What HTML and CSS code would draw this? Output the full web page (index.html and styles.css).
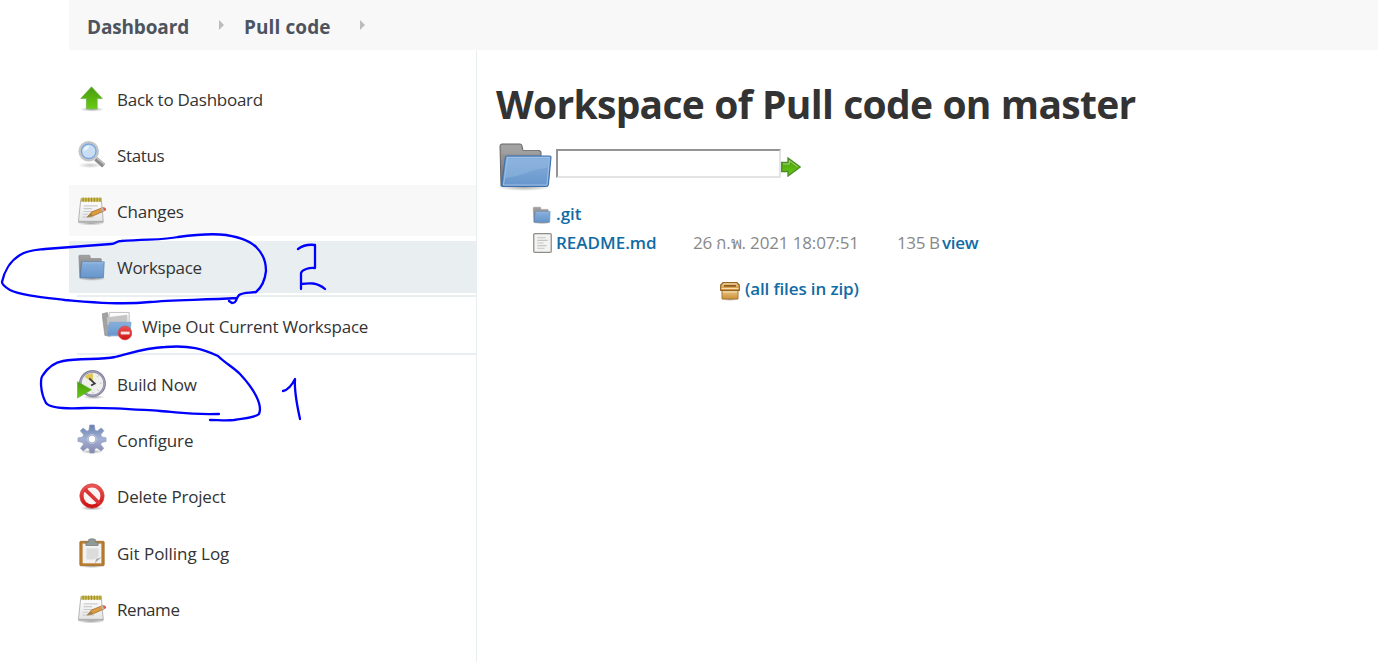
FILE: index.html
```html
<!DOCTYPE html>
<html lang="en">
<head>
<meta charset="utf-8">
<title>Workspace of Pull code on master</title>
<link rel="stylesheet" href="styles.css">
</head>
<body>
<svg class="defs" width="0" height="0" aria-hidden="true">
  <defs>
    <linearGradient id="green" x1="0" y1="0" x2="0" y2="1"><stop offset="0" stop-color="#4a9a10"/><stop offset="1" stop-color="#66cc10"/></linearGradient>
    <linearGradient id="blue" x1="0" y1="0" x2="0" y2="1"><stop offset="0" stop-color="#86afdd"/><stop offset="1" stop-color="#6796cb"/></linearGradient>
    <linearGradient id="grey" x1="0" y1="0" x2="0" y2="1"><stop offset="0" stop-color="#a3a3a3"/><stop offset="1" stop-color="#6d6d6d"/></linearGradient>
    <linearGradient id="paper" x1="0" y1="0" x2="0" y2="1"><stop offset="0" stop-color="#ffffff"/><stop offset="1" stop-color="#e3e3e3"/></linearGradient>
    <linearGradient id="gear" x1="0" y1="0" x2="0" y2="1"><stop offset="0" stop-color="#647fae"/><stop offset=".5" stop-color="#a4b2d4"/><stop offset="1" stop-color="#8585ad"/></linearGradient>
    <linearGradient id="red" x1="0" y1="0" x2="0" y2="1"><stop offset="0" stop-color="#ea5555"/><stop offset="1" stop-color="#cf1212"/></linearGradient>
    <linearGradient id="wood" x1="0" y1="0" x2="0" y2="1"><stop offset="0" stop-color="#e9c98f"/><stop offset="1" stop-color="#cf8f35"/></linearGradient>
    <radialGradient id="shadow"><stop offset="0" stop-color="#000" stop-opacity=".35"/><stop offset="1" stop-color="#000" stop-opacity="0"/></radialGradient>
    <symbol id="i-notepad" viewBox="0 0 32 32">
      <ellipse cx="15" cy="29" rx="15" ry="2.500" fill="url(#shadow)"/>
      <path d="M4 4h22l2 23.500H1.500z" fill="url(#paper)" stroke="#b0b0b0"/>
      <path d="M1.500 26.500h26.500v2H1.500z" fill="#b0b0b0"/>
      <path d="M4 2h22.500v4H4z" fill="#cbb84e"/>
      <path d="M6.500 1.500v5m3-5v5m3-5v5m3-5v5m3-5v5m3-5v5m3-5v5" stroke="#9b8b2c" stroke-width="1"/>
      <path d="M7 10.500h15M7 13.500h9M7 16.500h14M6 19.500h6M6 22.500h12" stroke="#cbcbcb" stroke-width="1.200"/>
      <path d="M11 22.500l4.500-5.500 11.500-4.500 2 3.500-11.500 5z" fill="#dc9a42" stroke="#99641e" stroke-width=".7"/>
      <path d="M11 22.500l4-4.500 2 3.200z" fill="#a68049"/>
      <path d="M25.500 13.200l2-.8 1.700 3.500-2 .9z" fill="#bbb"/>
      <path d="M27.500 12.200c2-1 5 1.800 3 3.300l-1.500.6z" fill="#df5a50"/>
    </symbol>
    <symbol id="i-folder" viewBox="0 0 32 32">
      <ellipse cx="16" cy="28.500" rx="15" ry="2.300" fill="url(#shadow)"/>
      <path d="M2 4.500q0-1 1-1h10q1 0 1 1V7h11q1 0 1 1v19.500H3z" fill="url(#grey)" stroke="#8a8a8a" stroke-width=".7"/>
      <path d="M5 10.500h24l-.8 17H3.500z" fill="url(#blue)" stroke="#557fb3" stroke-width=".8" stroke-linejoin="round"/>
      <path d="M6 11.500h22.200" stroke="#a8c5e6" stroke-width=".8"/>
    </symbol>
  </defs>
</svg>

<header class="crumbs">
  <a class="crumb dash">Dashboard</a>
  <svg class="caret" width="5" height="10" viewBox="0 0 5 10"><path d="M0 0l5 5-5 5z"/></svg>
  <a class="crumb pull">Pull code</a>
  <svg class="caret" width="5" height="10" viewBox="0 0 5 10"><path d="M0 0l5 5-5 5z"/></svg>
</header>

<div class="page">
  <nav class="tasks">
    <a class="task">
      <svg class="icon" viewBox="0 0 32 32"><ellipse cx="16" cy="27" rx="13" ry="2.500" fill="url(#shadow)"/><path d="M15.500 3L27 15.500H21.500v11H10V15.500H4z" fill="url(#green)" stroke="#6db648" stroke-width=".8"/></svg>
      <span class="t-back">Back to Dashboard</span>
    </a>
    <a class="task">
      <svg class="icon" viewBox="0 0 32 32"><ellipse cx="14" cy="27" rx="13" ry="3" fill="url(#shadow)" opacity=".6"/><path d="M20 20l8.500 7.500" stroke="#8c8c8c" stroke-width="5"/><path d="M21 19l8.500 7.500" stroke="#c4c4c4" stroke-width="1.500"/><circle cx="12.500" cy="12" r="9.800" fill="#c9def4" stroke="#c6c6c6" stroke-width="2.400"/><circle cx="12.500" cy="12" r="7.800" fill="none" stroke="#7ba4d7" stroke-width="1.500"/><path d="M7 12c0-3.500 2.500-5.500 6-5.500-1 3-2.500 4.500-6 5.500z" fill="#edf5fd"/></svg>
      <span class="t-status">Status</span>
    </a>
    <a class="task hover">
      <svg class="icon"><use href="#i-notepad"/></svg>
      <span class="t-changes">Changes</span>
    </a>
    <a class="task active">
      <svg class="icon"><use href="#i-folder"/></svg>
      <span class="t-workspace">Workspace</span>
    </a>
    <div class="subtasks">
      <a class="task">
        <svg class="icon" viewBox="0 0 32 32"><path d="M0 3l6-1.500 3 25.500-6-1z" fill="#a2a2a2" stroke="#8d8d8d" stroke-width=".6"/><path d="M8 1.500h21v13H6z" fill="url(#paper)" stroke="#aaa" stroke-width=".8"/><path d="M5 7l22-3v11H6z" fill="#c4c4c4"/><path d="M8 12h23l-1.500 14.500H5.500z" fill="url(#blue)" stroke="#7fa4d0" stroke-width=".8"/><circle cx="24.500" cy="23.500" r="7.300" fill="url(#red)" stroke="#d54a4a" stroke-width=".8"/><path d="M20 22h9.500v3H20z" fill="#f7e6e6"/></svg>
        <span class="t-wipe">Wipe Out Current Workspace</span>
      </a>
    </div>
    <a class="task">
      <svg class="icon" viewBox="0 0 32 32"><ellipse cx="18" cy="30" rx="12" ry="2" fill="url(#shadow)"/><circle cx="16.500" cy="15.500" r="13" fill="#efefec" stroke="#82829f" stroke-width="2.800"/><circle cx="16.500" cy="15.500" r="12.800" fill="none" stroke="#aaaac2" stroke-width="1"/><path d="M17 14L8 8.500A11 11 0 0 1 17 4.500z" fill="#dfc65a"/><path d="M13 10l6 5.500-4 2" stroke="#3c3c3c" stroke-width="1.800" fill="none"/><path d="M22 8l1-1m2 8h1m-4 7l1 1m-6 2v1" stroke="#999" stroke-width="1"/><path d="M.500 13.500L15.500 22 .500 31z" fill="url(#green)" stroke="#5ba436" stroke-width=".6"/></svg>
      <span class="t-build">Build Now</span>
    </a>
    <a class="task">
      <svg class="icon gear" viewBox="0 0 32 32"><ellipse cx="16" cy="29.500" rx="12" ry="2.500" fill="url(#shadow)"/><path fill-rule="evenodd" d="M13.500 1h5l.8 5.600 2.200.9 4.400-3.300 2.800 2.900-3.300 4.200.9 2.500 4.700.9v4l-4.800 1-.9 2.200 3.300 4.100-3 2.900-4.300-3.400-2.200 1-.9 4.500h-4.300l-1-4.700-2.100-.9-4.200 3.400-2.900-2.900 3.200-4.200-.8-2-5.100-1v-3.800l5.100-1 .9-2.400L3.500 7.200l3-2.900 4.200 3.300 2-.9zM16 12a4 4 0 1 0 .01 0z" fill="url(#gear)" stroke="#929dbf" stroke-width=".7" stroke-linejoin="round"/><circle cx="16" cy="16" r="4.800" fill="none" stroke="#bcc5df" stroke-width="1"/></svg>
      <span class="t-configure">Configure</span>
    </a>
    <a class="task">
      <svg class="icon" viewBox="0 0 32 32"><ellipse cx="16" cy="29" rx="13" ry="2.500" fill="url(#shadow)"/><circle cx="16" cy="16" r="11" fill="#f9f3f3" stroke="url(#red)" stroke-width="4"/><path d="M8.500 9l15.500 15" stroke="#dc3434" stroke-width="4"/><circle cx="16" cy="16" r="13" fill="none" stroke="#d04545" stroke-width=".7"/></svg>
      <span class="t-delete">Delete Project</span>
    </a>
    <a class="task">
      <svg class="icon" viewBox="0 0 32 32"><ellipse cx="16" cy="30" rx="14" ry="2" fill="url(#shadow)"/><rect x="3" y="3.500" width="26" height="26" rx="1" fill="#bb7b2c" stroke="#9c6d2e" stroke-width=".8"/><path d="M6 6h20v21H6z" fill="#f2f2f2"/><path d="M10 11h13v9l-5 3h-8z" fill="#dcdcdc"/><path d="M19 27l1.500-5 5.500-1.500z" fill="#aaa"/><path d="M9.500 8V5.500q0-1.500 2-1.500h1V1.500q3.500-1.500 7 0V4h1q2 0 2 1.500V8z" fill="#929a96" stroke="#68706c" stroke-width=".7"/></svg>
      <span class="t-git">Git Polling Log</span>
    </a>
    <a class="task">
      <svg class="icon"><use href="#i-notepad"/></svg>
      <span class="t-rename">Rename</span>
    </a>
  </nav>

  <main class="main">
    <h1>Workspace of Pull code on master</h1>
    <div class="pathbar">
      <svg class="big-folder" viewBox="0 0 56 56">
        <ellipse cx="28" cy="47" rx="27" ry="4" fill="url(#shadow)"/>
        <path d="M4 6q0-2 2-2h18q2 0 2 2l1 4.500h16q2 0 2 2V46H5z" fill="url(#grey)" stroke="#666"/>
        <path d="M5.500 7h19M5.500 9h20M5.500 11h37M5.500 13h38" stroke="#b0b0b0" stroke-width=".6"/>
        <path d="M11 16h42.500q1.500 0 1.400 1.500l-2.500 27q-.3 2-2.400 2H7.500q-2 0-1.700-2l3.500-26.500q.2-2 1.700-2z" fill="url(#blue)" stroke="#3d70ad" stroke-width="1.200"/>
        <path d="M11.500 17.500h42l-2.500 27.500H7.500z" fill="none" stroke="#a9c6e7" stroke-width=".8"/>
        <path d="M11 19h41.500l-1 9C35 29 28 36 8.500 38z" fill="#9bbde3" opacity=".4"/>
      </svg>
      <input class="path" type="text" aria-label="Path">
      <svg class="go" viewBox="0 0 20 20"><path d="M.7 5.500H7V1l12.200 9L7 19v-4.500H.7z" fill="url(#green)" stroke="#4c8b26" stroke-width="1.300"/><path d="M2 7h6.300V3.500l8.500 6.500" fill="none" stroke="#a5d583" stroke-width="1"/></svg>
    </div>
    <div class="files">
      <div class="row">
        <svg class="file-icon" viewBox="0 0 32 32"><use href="#i-folder"/></svg>
        <a class="link t-dotgit">.git</a>
      </div>
      <div class="row">
        <svg class="file-icon doc" viewBox="0 0 18 19"><rect x=".7" y=".7" width="16.600" height="17.600" rx="1" fill="#f3f3f1" stroke="#8d8d8b" stroke-width="1.200"/><path d="M4 4.500h8M4 7h10M4 9.500h6M4 12h9M4 14.500h7" stroke="#c5c5c5"/></svg>
        <a class="link t-readme">README.md</a>
        <span class="date">26 ก.พ. 2021 18:07:51</span>
        <span class="size">135 B</span>
        <a class="link t-view">view</a>
      </div>
    </div>
    <div class="zip">
      <svg class="box" viewBox="0 0 20 20"><ellipse cx="10" cy="18.500" rx="9" ry="1.500" fill="url(#shadow)"/><path d="M2 9h16v9H2z" fill="url(#wood)" stroke="#a97835"/><path d="M3 1.500h14l2.300 2.500v5.500H.7V4z" fill="url(#wood)" stroke="#946425" stroke-width="1.200"/><path d="M4 4h12v1.800H4z" fill="#8e5d20"/><path d="M1.500 7.500h17M3 11h14" stroke="#f6ddb0"/></svg>
      <a class="link t-zip">(all files in zip)</a>
    </div>
  </main>
</div>

<svg class="ink" viewBox="0 0 1378 662" aria-hidden="true">
  <path d="M237 298C200 300 170 300 150 302C120 305 90 302 65 300C40 297 20 295 10 290C5 287 2 284 2 282C4 272 10 261 20 255C28 250 37 250 45 249L111 244C116 244 116 241 121 241C150 239 165 240 178 237C200 234 218 234 226 235C244 238 253 243 257 248C264 255 266 263 266 271C265 280 262 287 256 292C250 293 243 292 239 295C235 300 237 303 232 303L229 301"/>
  <path d="M219 414C188 415 178 412 160 411C128 409 105 407 85 408C65 409 50 408 46 403C40 392 40 378 43 375C49 366 57 362 63 361C80 358 100 360 115 357C132 353 143 348 165 347C190 345 203 349 218 356C225 363 233 367 240 374C254 389 263 405 259 414C255 418 244 418 234 420C226 421 218 420 210 420"/>
  <path d="M298 249C302 246 307 244 315 245V268C309 267 302 270 301 273V289M301 284C309 283 317 282 325 289"/>
  <path d="M283 391C288 390 292 385 295 379C294 392 297 405 300 419"/>
</svg>
</body>
</html>
```
FILE: styles.css
```css
* { box-sizing: border-box; }

body {
  margin: 0;
  width: 1378px;
  height: 662px;
  overflow: hidden;
  background: #fff;
  color: #333;
  font: 17px/24px "Open Sans", "Noto Sans", "Liberation Sans", sans-serif;
}

.defs { position: absolute; }
span, a { white-space: nowrap; }

.crumbs {
  display: flex;
  align-items: center;
  height: 50px;
  margin-left: 69px;
  padding: 3px 0 0 18px;
  background: #f8f8f8;
}
.crumb { font-size: 19px; font-weight: 700; color: #4d545d; }
.dash { width: 132px; letter-spacing: -.15px; }
.pull { width: 116px; letter-spacing: .1px; }
.caret { flex: none; margin-top: -3px; fill: #bcbcbc; }
.dash + .caret { margin-right: 20px; }

.page { display: flex; height: 612px; margin-left: 69px; }

.tasks {
  flex: none;
  width: 408px;
  padding-top: 23px;
  border-right: 1px solid #e9eef1;
}
.task {
  display: flex;
  align-items: center;
  height: 52px;
  margin-bottom: 4.200px;
  padding-left: 8px;
  gap: 10px;
}
.task span { padding-top: 2px; }
.icon { flex: none; width: 30px; height: 30px; }
.gear { margin-top: -2px; }
.hover { background: #f8f8f8; height: 51px; margin-bottom: 5px; }
.active { background: #e9eef1; margin-bottom: 2px; }
.subtasks {
  margin: 0 0 2.600px 8px;
  border: solid #e9eef1;
  border-width: 2px 0;
  height: 60px;
}
.subtasks .task { height: 57px; margin: 0; padding-left: 25px; }

.t-back { letter-spacing: -.26px; }
.t-status { letter-spacing: -.35px; }
.t-changes { letter-spacing: -.17px; }
.t-workspace { letter-spacing: -.3px; }
.t-wipe { letter-spacing: -.2px; }
.t-build { letter-spacing: -.13px; }
.t-configure { letter-spacing: -.13px; }
.t-delete { letter-spacing: -.19px; }
.t-git { letter-spacing: -.04px; }
.t-rename { letter-spacing: -.45px; }

.main { flex: 1; padding: 28px 0 0 19px; }
h1 {
  margin: 0;
  font-size: 39px;
  line-height: 52px;
  font-weight: 700;
  letter-spacing: -.7px;
  word-spacing: .6px;
  color: #333;
}
.pathbar { display: flex; align-items: flex-start; height: 58px; padding-top: 10px; }
.big-folder { flex: none; width: 56px; height: 56px; margin-left: -.5px; }
.path {
  width: 225px;
  height: 29px;
  margin: 9px 0 0 4.500px;
  padding: 1px;
  border: 2px solid;
  border-color: #949494 #e3e3e3 #e3e3e3 #949494;
  background: #fff;
}
.go { flex: none; width: 20px; height: 20px; margin-top: 17px; }

.files { padding: 11px 0 0 36px; }
.row { display: flex; align-items: center; height: 29px; }
.file-icon { flex: none; width: 20px; height: 20px; margin: 3px 4px 0 0; }
.doc { width: 19px; margin: 1px 4px 0 1px; }
.link { color: #116ba5; font-weight: 600; }
.date, .size { color: #888; }
.t-readme { width: 137px; }
.date { width: 204px; letter-spacing: -.14px; }
.size { width: 45px; letter-spacing: -.4px; }
.t-view { letter-spacing: -.25px; }
.zip { display: flex; align-items: center; padding: 20px 0 0 224px; }
.box { width: 20px; height: 20px; margin: 3px 5px 0 0; }
.t-zip { letter-spacing: -.13px; }

.ink {
  position: absolute;
  inset: 0;
  width: 1378px;
  height: 662px;
  pointer-events: none;
  fill: none;
  stroke: #00f;
  stroke-width: 2.300;
  stroke-linecap: round;
  stroke-linejoin: round;
}
```
